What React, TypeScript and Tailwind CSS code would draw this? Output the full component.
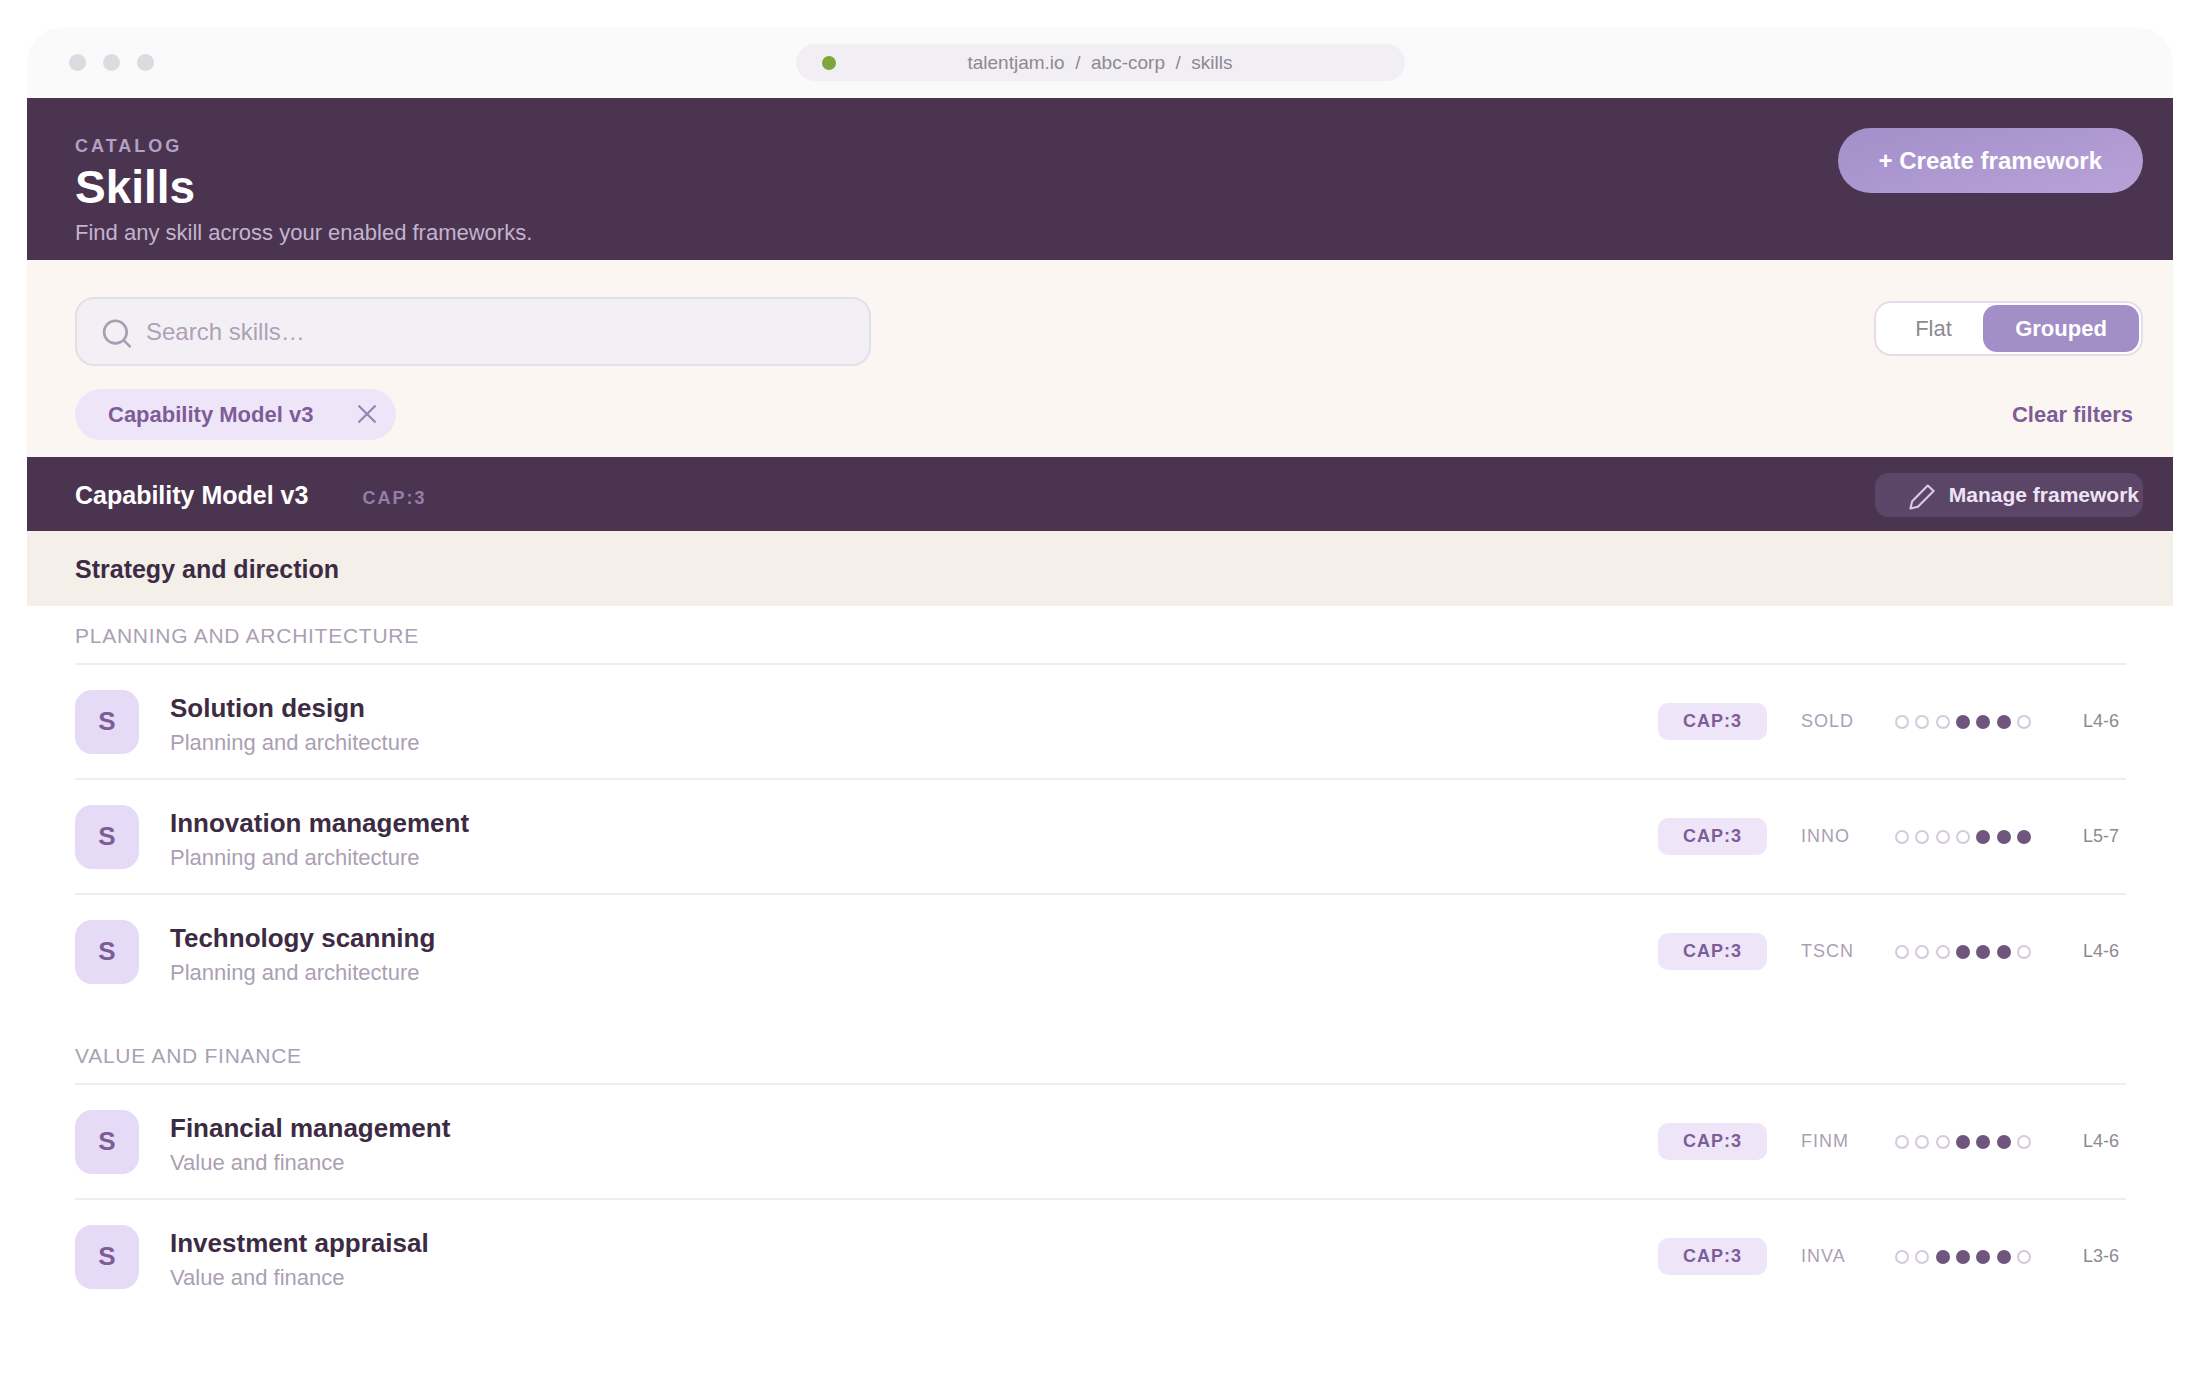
import { useState } from "react";
import clsx from "clsx";

type Skill = {
  name: string;
  code: string;
  from: number;
  to: number;
};

const groups: { title: string; skills: Skill[] }[] = [
  {
    title: "Planning and architecture",
    skills: [
      { name: "Solution design", code: "SOLD", from: 4, to: 6 },
      { name: "Innovation management", code: "INNO", from: 5, to: 7 },
      { name: "Technology scanning", code: "TSCN", from: 4, to: 6 },
    ],
  },
  {
    title: "Value and finance",
    skills: [
      { name: "Financial management", code: "FINM", from: 4, to: 6 },
      { name: "Investment appraisal", code: "INVA", from: 3, to: 6 },
    ],
  },
];

const levels = [1, 2, 3, 4, 5, 6, 7];

function BrowserBar() {
  return (
    <div className="grid h-[71px] grid-cols-[1fr_609px_1fr] items-center bg-[#fafafa]">
      <div className="flex gap-[17px] pl-[42px]">
        <span className="size-[17px] rounded-full bg-[#dfdae2]" />
        <span className="size-[17px] rounded-full bg-[#dfdae2]" />
        <span className="size-[17px] rounded-full bg-[#dfdae2]" />
      </div>
      <div className="grid h-[37px] grid-cols-[1fr_auto_1fr] items-center rounded-full bg-[#f1eff4] px-[26px]">
        <span className="size-[14px] rounded-full bg-[#7fa63c]" />
        <span className="whitespace-pre text-[19px] leading-6 text-[#8d8991]">
          {"talentjam.io  /  abc-corp  /  skills"}
        </span>
      </div>
    </div>
  );
}

function PageHeader() {
  return (
    <header className="flex items-start justify-between bg-[#4b344f] pt-[30px] pr-[30px] pb-[10px] pl-12">
      <div className="pt-[6px]">
        <p className="text-[18px] leading-6 font-bold tracking-[3px] text-[#b3a1c4]">CATALOG</p>
        <h1 className="text-[46px] leading-[58px] font-bold text-white">Skills</h1>
        <p className="text-[22px] leading-[34px] text-[#c3b3d0]">
          Find any skill across your enabled frameworks.
        </p>
      </div>
      <button
        type="button"
        className="h-[65px] rounded-full bg-linear-165 from-[#a38fc9] to-[#b7a2d8] px-[41px] text-[24px] font-bold text-white"
      >
        + Create framework
      </button>
    </header>
  );
}

function Filters() {
  const [view, setView] = useState("Grouped");

  return (
    <div className="bg-[#fbf6f2] pt-[37px] pr-[30px] pb-[17px] pl-12">
      <div className="flex items-start justify-between">
        <label className="flex h-[69px] w-[796px] items-center rounded-[19px] border-2 border-[#e4deea] bg-[#f3f0f5] px-[25px]">
          <svg viewBox="0 0 30 32" className="h-8 w-[30px] shrink-0" fill="none" stroke="#a99cb3" strokeWidth="2.6" strokeLinecap="round" aria-hidden="true">
            <circle cx="13.4" cy="16.1" r="11.3" />
            <path d="M21.6 24.2 27.8 30.4" />
          </svg>
          <input
            type="text"
            aria-label="Search skills"
            placeholder="Search skills…"
            className="ml-[14px] w-full bg-transparent text-[24px] leading-8 outline-none placeholder:text-[#ada1b6]"
          />
        </label>
        <div className="mt-1 flex h-[55px] w-[269px] rounded-[17px] border-2 border-[#e4deea] bg-white p-[2px]">
          {["Flat", "Grouped"].map((option) => (
            <button
              key={option}
              type="button"
              aria-pressed={view === option}
              onClick={() => setView(option)}
              className={clsx(
                "rounded-[14px] text-[22px]",
                option === "Grouped" ? "w-[156px]" : "flex-1 pl-[6px]",
                view === option ? "bg-[#a28fc8] font-bold text-white" : "text-[#8d8991]",
              )}
            >
              {option}
            </button>
          ))}
        </div>
      </div>
      <div className="mt-[23px] flex items-center justify-between">
        <div className="flex h-[51px] w-[321px] items-center justify-between rounded-full bg-[#efe5f9] pr-[20px] pl-[33px] text-[22px] font-bold text-[#7d5d98]">
          Capability Model v3
          <button type="button" aria-label="Remove Capability Model v3 filter" className="pb-[2px]">
            <svg viewBox="0 0 18 18" className="size-[18px]" fill="none" stroke="#9a84b1" strokeWidth="2.3" strokeLinecap="round" aria-hidden="true">
              <path d="M1.2 1.2 16.8 16.8M16.8 1.2 1.2 16.8" />
            </svg>
          </button>
        </div>
        <button type="button" className="pr-[10px] text-[22px] font-bold text-[#7d5d98]">
          Clear filters
        </button>
      </div>
    </div>
  );
}

function FrameworkBar() {
  return (
    <div className="flex h-[74px] items-center justify-between bg-[#4b344f] pt-[2px] pr-[30px] pl-12">
      <div className="flex items-baseline gap-[54px]">
        <h2 className="text-[25px] leading-8 font-bold text-white">Capability Model v3</h2>
        <span className="text-[18px] font-bold tracking-[2px] text-[#947ea9]">CAP:3</span>
      </div>
      <button
        type="button"
        className="flex h-11 items-center rounded-[14px] bg-[#5c4668] pr-1 pl-[34px] text-[21px] font-bold text-[#eee4f6]"
      >
        <svg viewBox="0 0 26 26" className="mt-1 mr-[14px] size-[26px]" fill="none" stroke="#d9cae6" strokeWidth="2.1" strokeLinejoin="round" aria-hidden="true">
          <path d="M1.4 24.6 3.2 17.2 18.8 1.5 24.6 7.1 8.9 22.8Z" />
        </svg>
        Manage framework
      </button>
    </div>
  );
}

function SkillRow({ skill, group }: { skill: Skill; group: string }) {
  return (
    <li className="flex h-[115px] items-center border-b-2 border-[#f0ecf0] pr-[7px] last:border-transparent">
      <span className="flex size-16 items-center justify-center rounded-[17px] bg-[#e5dbf6] text-[26px] font-bold text-[#7d5d98]">
        S
      </span>
      <div className="mt-2 ml-[31px] flex-1">
        <h4 className="text-[26px] leading-[34px] font-bold text-[#3d2b43]">{skill.name}</h4>
        <p className="text-[22px] leading-9 text-[#ab9fb4]">{group}</p>
      </div>
      <span className="flex h-[37px] w-[109px] items-center justify-center rounded-[10px] bg-[#efe5f9] text-[18px] font-bold tracking-[1px] text-[#7d5d98]">
        CAP:3
      </span>
      <span className="ml-[34px] w-[94px] text-[18px] tracking-[1px] text-[#ab9fb4]">{skill.code}</span>
      <span className="flex w-[136px] justify-between">
        {levels.map((level) => (
          <span
            key={level}
            className={clsx(
              "size-[14px] rounded-full",
              level >= skill.from && level <= skill.to ? "bg-[#6e567e]" : "border-2 border-[#d5cadc]",
            )}
          />
        ))}
      </span>
      <span className="w-[88px] text-right text-[18px] text-[#8d8991]">
        L{skill.from}-{skill.to}
      </span>
    </li>
  );
}

export default function App() {
  return (
    <div className="min-h-screen bg-white p-[27px] font-['Liberation_Sans',Arial,sans-serif]">
      <main className="overflow-hidden rounded-[36px] bg-white">
        <BrowserBar />
        <PageHeader />
        <Filters />
        <FrameworkBar />
        <h2 className="flex h-[75px] items-center bg-[#f4efe9] pt-[2px] pl-12 text-[25px] font-bold text-[#3d2b43]">
          Strategy and direction
        </h2>
        <div className="flex flex-col gap-4 pr-[47px] pl-12">
          {groups.map((group) => (
            <section key={group.title}>
              <h3 className="flex h-[59px] items-center border-b-2 border-[#f0ecf0] pt-[2px] text-[21px] tracking-[0.035em] text-[#ab9fb4] uppercase">
                {group.title}
              </h3>
              <ul>
                {group.skills.map((skill) => (
                  <SkillRow key={skill.code} skill={skill} group={group.title} />
                ))}
              </ul>
            </section>
          ))}
        </div>
      </main>
    </div>
  );
}
